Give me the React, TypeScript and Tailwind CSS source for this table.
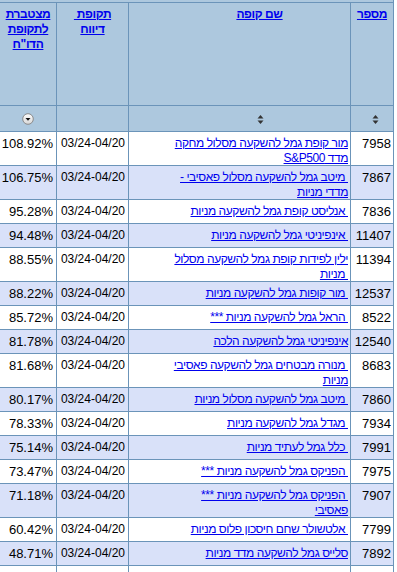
import React from "react";

type Row = { pct: string; name: string[]; num: string };

const rows: Row[] = [
  { pct: "108.92%", name: ["מור קופת גמל להשקעה מסלול מחקה", "מדד S&P500"], num: "7958" },
  { pct: "106.75%", name: ["\u00a0מיטב גמל להשקעה מסלול פאסיבי -", "מדדי מניות"], num: "7867" },
  { pct: "95.28%", name: ["\u00a0אנליסט קופת גמל להשקעה מניות"], num: "7836" },
  { pct: "94.48%", name: ["\u00a0אינפיניטי גמל להשקעה מניות"], num: "11407" },
  { pct: "88.55%", name: ["ילין לפידות קופת גמל להשקעה מסלול", "\u00a0מניות"], num: "11394" },
  { pct: "88.22%", name: ["\u00a0מור קופות גמל להשקעה מניות"], num: "12537" },
  { pct: "85.72%", name: ["\u00a0הראל גמל להשקעה מניות ***"], num: "8522" },
  { pct: "81.78%", name: ["אינפיניטי גמל להשקעה הלכה"], num: "12540" },
  { pct: "81.68%", name: ["\u00a0מנורה מבטחים גמל להשקעה פאסיבי", "מניות"], num: "8683" },
  { pct: "80.17%", name: ["\u00a0מיטב גמל להשקעה מסלול מניות"], num: "7860" },
  { pct: "78.33%", name: ["\u00a0מגדל גמל להשקעה מניות"], num: "7934" },
  { pct: "75.14%", name: ["\u00a0כלל גמל לעתיד מניות"], num: "7991" },
  { pct: "73.47%", name: ["\u00a0הפניקס גמל להשקעה מניות ***"], num: "7975" },
  { pct: "71.18%", name: ["\u00a0הפניקס גמל להשקעה מניות ***", "פאסיבי"], num: "7907" },
  { pct: "60.42%", name: ["\u00a0אלטשולר שחם חיסכון פלוס מניות"], num: "7799" },
  { pct: "48.71%", name: ["סלייס גמל להשקעה מדד מניות"], num: "7892" },
];

const SortIcon = () => (
  <svg width="7" height="11" viewBox="0 0 7 11" className="block">
    <path d="M0.5 4.5 L3.5 1 L6.5 4.5 Z" fill="#333" />
    <path d="M0.5 6.5 L3.5 10 L6.5 6.5 Z" fill="#333" />
  </svg>
);

const DropIcon = () => (
  <svg width="12" height="12" viewBox="0 0 12 12" className="block">
    <defs>
      <linearGradient id="g" x1="0" y1="0" x2="0" y2="1">
        <stop offset="0" stopColor="#ffffff" />
        <stop offset="1" stopColor="#d6d6d6" />
      </linearGradient>
    </defs>
    <circle cx="6" cy="6" r="5.3" fill="url(#g)" stroke="#8a8a8a" strokeWidth="1" />
    <path d="M3.5 5 L8.5 5 L6 7.8 Z" fill="#111" />
  </svg>
);

const grid = "grid grid-cols-[57px_72px_222px_43px]";
const cell = "border-r border-[#6b94b9]";

export default function App() {
  return (
    <div className="w-[397px] h-[572px] overflow-hidden bg-white font-['Liberation_Sans',Arial,sans-serif] text-[13px] leading-[15px] text-black">
      <div className="w-[394px]">
        <div className="h-[2px] bg-[#adc8de] border-r border-[#6b94b9]" />
        <div className="border-t border-[#6b94b9]">
          {/* header */}
          <div className={`${grid} h-[103px] border-b border-[#6b94b9] bg-[#adc8de] font-bold text-[12px] tracking-[-0.4px]`}>
            <div className={`${cell} pt-[4px] text-center`} dir="rtl">
              <a className="text-[#0000ee] underline">
                מצטברת
                <br />
                לתקופת
                <br />
                הדו"ח
              </a>
            </div>
            <div className={`${cell} pt-[4px] text-center`} dir="rtl">
              <a className="text-[#0000ee] underline">
                תקופת&nbsp;
                <br />
                דיווח
              </a>
            </div>
            <div className={`${cell} pt-[4px] pl-[40px] text-center`} dir="rtl">
              <a className="text-[#0000ee] underline">שם קופה</a>
            </div>
            <div className={`${cell} pt-[4px] text-center`} dir="rtl">
              <a className="text-[#0000ee] underline">מספר</a>
            </div>
          </div>
          {/* filter row */}
          <div className={`${grid} h-[26px] border-b border-[#6b94b9] bg-[#adc8de]`}>
            <div className={`${cell} flex items-center justify-center pt-[1px]`}>
              <DropIcon />
            </div>
            <div className={cell} />
            <div className={`${cell} flex items-center justify-center pl-[42px] pt-[1px]`}>
              <SortIcon />
            </div>
            <div className={`${cell} flex items-center justify-center pl-[6px] pt-[1px]`}>
              <SortIcon />
            </div>
          </div>
          {/* body */}
          {rows.map((r, i) => (
            <div
              key={r.num}
              className={`${grid} border-b border-[#6b94b9] ${i % 2 === 1 ? "bg-[#d9e1f9]" : "bg-white"} ${
                r.name.length > 1 ? "h-[34px]" : "h-[24px]"
              }`}
            >
              <div className={`${cell} pt-[4px] pr-[3px] text-right whitespace-nowrap`}>{r.pct}</div>
              <div className={`${cell} pt-[4px] pr-[3px] text-right whitespace-nowrap text-[12px]`}>03/24-04/20</div>
              <div className={`${cell} pt-[4px] pr-[2px] text-right text-[12px] tracking-[-0.45px]`} dir="rtl">
                {r.name.map((l, j) => (
                  <div key={j} className="whitespace-nowrap">
                    <a className="text-[#0000ee] underline">{l}</a>
                  </div>
                ))}
              </div>
              <div className={`${cell} pt-[4px] pr-[2px] text-right whitespace-nowrap`}>{r.num}</div>
            </div>
          ))}
          <div className={`${grid} h-[24px] bg-white`}>
            <div className={cell} />
            <div className={cell} />
            <div className={cell} />
            <div className={cell} />
          </div>
        </div>
      </div>
    </div>
  );
}
